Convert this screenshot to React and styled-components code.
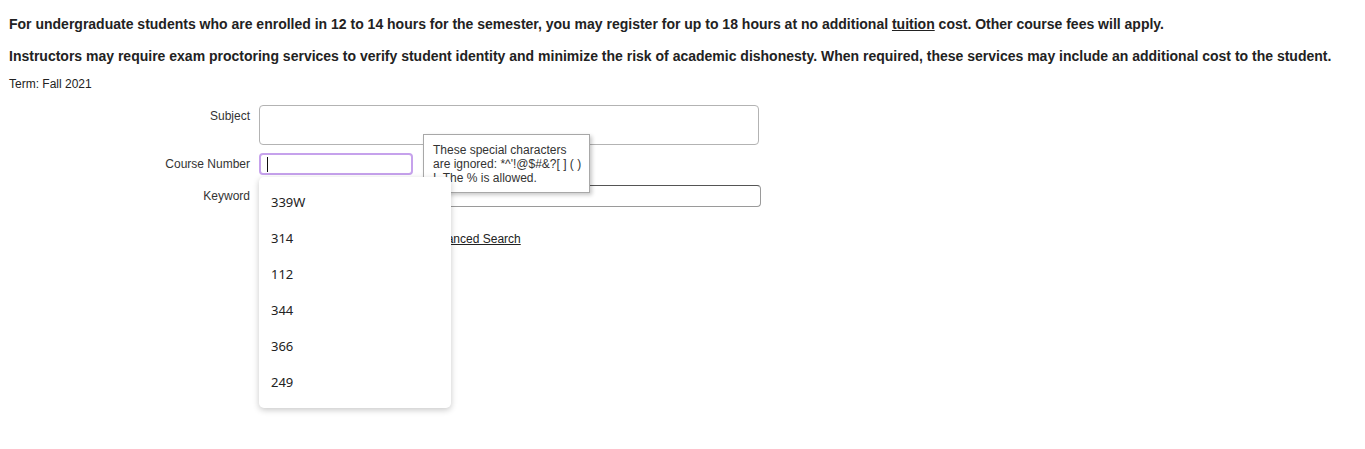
import React from 'react';
import styled, { createGlobalStyle } from 'styled-components';

const GlobalStyle = createGlobalStyle`
  html, body {
    margin: 0;
    padding: 0;
    background: #fff;
  }
  body {
    font-family: "Liberation Sans", Arial, sans-serif;
    color: #222;
  }
`;

const Page = styled.div`
  box-sizing: border-box;
  min-height: 100vh;
  padding: 16px 9px;
`;

const Header = styled.div`
  display: flex;
  flex-direction: column;
`;

const Notice = styled.p`
  margin: 0;
  font-size: 14px;
  line-height: 16px;
  font-weight: bold;
  color: #222;
  white-space: nowrap;

  & + & {
    margin-top: 16px;
  }
`;

const InlineLink = styled.a`
  color: inherit;
  text-decoration: underline;
`;

const Term = styled.div`
  margin-top: 13px;
  font-size: 12px;
  line-height: 14px;
  color: #222;
`;

const Form = styled.form`
  margin-top: 14px;
  display: grid;
  grid-template-columns: 241px auto;
  column-gap: 9px;
  row-gap: 8px;
  align-items: start;
  justify-content: start;
`;

const Label = styled.label`
  padding-top: ${p => 4 + (p.$shift || 0)}px;
  font-size: 12px;
  line-height: 14px;
  color: #333;
  text-align: right;
`;

const TextArea = styled.textarea`
  box-sizing: border-box;
  width: 500px;
  height: 40px;
  border: 1px solid #b3b3b3;
  border-radius: 4px;
  resize: none;
  font: inherit;
  outline: none;
`;

const Field = styled.div`
  position: relative;
  width: ${p => p.$width}px;
  margin-top: ${p => p.$top || 0}px;
`;

const FocusedBox = styled.div`
  box-sizing: border-box;
  height: 22px;
  border: 2px solid #c6a2ec;
  border-radius: 4px;
  display: flex;
  align-items: center;
  padding-left: 6px;
`;

const Caret = styled.span`
  width: 1px;
  height: 15px;
  background: #111;
`;

const TextInput = styled.input`
  box-sizing: border-box;
  width: 502px;
  height: 22px;
  border: 1px solid #9a9a9a;
  border-top-color: #555;
  border-radius: 4px;
  outline: none;
  font: inherit;
`;

const Tooltip = styled.div`
  position: absolute;
  left: 164px;
  top: -19px;
  z-index: 1;
  box-sizing: border-box;
  width: 167px;
  height: 59px;
  padding: 8px 8px 9px 9px;
  background: #fff;
  border: 1px solid #a8a8a8;
  box-shadow: 2px 2px 4px rgba(0, 0, 0, 0.22);
  font-size: 12px;
  line-height: 14px;
  color: #333;
  white-space: nowrap;
`;

const Dropdown = styled.ul`
  position: absolute;
  left: 0;
  top: 24px;
  z-index: 2;
  box-sizing: border-box;
  width: 192px;
  height: 231px;
  margin: 0;
  padding: 7px 0 8px;
  list-style: none;
  background: #fff;
  border-radius: 5px;
  box-shadow: 0 2px 6px rgba(0, 0, 0, 0.22);
`;

const Option = styled.li`
  height: 36px;
  display: flex;
  align-items: center;
  padding-left: 12px;
  font-family: "Noto Sans", "Open Sans", sans-serif;
  font-size: 13px;
  color: #222;
`;

const Actions = styled.div`
  grid-column: 2;
  margin-top: 12px;
  display: flex;
  align-items: center;
  gap: 12px;
`;

const SearchButton = styled.button`
  width: 155px;
  height: 24px;
  font: inherit;
  font-size: 12px;
`;

const AdvancedLink = styled.a`
  font-size: 12px;
  line-height: 14px;
  color: #222;
  text-decoration: underline;
`;

const courses = ['339W', '314', '112', '344', '366', '249'];

export default function App() {
  return (
    <>
      <GlobalStyle />
      <Page>
        <Header>
          <Notice>
            For undergraduate students who are enrolled in 12 to 14 hours for the semester, you may register for up to 18 hours at no additional{' '}
            <InlineLink href="#">tuition</InlineLink> cost. Other course fees will apply.
          </Notice>
          <Notice>
            Instructors may require exam proctoring services to verify student identity and minimize the risk of academic dishonesty. When required, these services may include an additional cost to the student.
          </Notice>
          <Term>Term: Fall 2021</Term>
        </Header>
        <Form onSubmit={e => e.preventDefault()}>
          <Label>Subject</Label>
          <TextArea />

          <Label>Course Number</Label>
          <Field $width={154}>
            <FocusedBox role="textbox">
              <Caret />
            </FocusedBox>
            <Tooltip>
              These special characters
              <br />
              are ignored: *^'!@$#&amp;?[ ] ( )
              <br />
              !. The % is allowed.
            </Tooltip>
            <Dropdown>
              {courses.map(c => (
                <Option key={c}>{c}</Option>
              ))}
            </Dropdown>
          </Field>

          <Label $shift={2}>Keyword</Label>
          <Field $width={502} $top={2}>
            <TextInput type="text" />
          </Field>

          <Actions>
            <SearchButton type="submit">Search</SearchButton>
            <AdvancedLink href="#">Advanced Search</AdvancedLink>
          </Actions>
        </Form>
      </Page>
    </>
  );
}
